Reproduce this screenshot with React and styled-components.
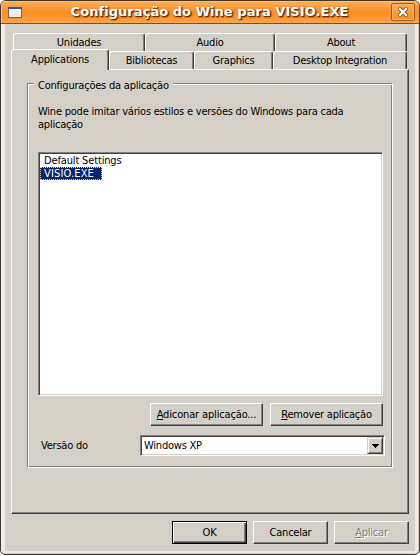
import React from "react";
import styled, { createGlobalStyle, css } from "styled-components";

const Global = createGlobalStyle`
  * { box-sizing: border-box; }
  body { margin: 0; background: #fff; }
`;

const face = "#d4d0c8";

const raised = css`
  border: 1px solid;
  border-color: #fff #404040 #404040 #fff;
  box-shadow: inset -1px -1px #808080;
`;

const sunken = css`
  border: 1px solid;
  border-color: #808080 #fff #fff #808080;
  box-shadow: inset 1px 1px #404040, inset -1px -1px ${face};
`;

const Window = styled.div`
  width: 420px;
  height: 555px;
  overflow: hidden;
  border: 1px solid #40362f;
  border-radius: 6px 6px 5px 5px;
  background: #efebe4;
  box-shadow: inset -1px -1px #d8cabb;
  font: 11px/13px "DejaVu Sans Condensed", "DejaVu Sans", sans-serif;
  font-stretch: condensed;
  color: #000;
`;

const TitleBar = styled.header`
  height: 23px;
  display: flex;
  align-items: center;
  padding: 0 4px 0 7px;
  border-bottom: 1px solid #8c4a14;
  box-shadow: inset 1px 1px #ffc07a;
  background: linear-gradient(#ffb05c 0, #ff9c3c 30%, #f88f24 50%, #fb962f 75%, #ffa64a 100%);
`;

const WindowIcon = styled.svg`
  width: 14px;
  height: 11px;
  flex: none;
`;

const Title = styled.h1`
  flex: 1;
  margin: 0;
  padding-left: 6px;
  text-align: center;
  white-space: nowrap;
  font: bold 13px/22px "DejaVu Sans", sans-serif;
  letter-spacing: ${(p) => p.$spacing}px;
  color: #fff;
  text-shadow: 1px 1px 1px #4a2608, 1px 1px 2px #6d3a10;
`;

const CloseButton = styled.button`
  width: 24px;
  height: 18px;
  padding: 0;
  display: grid;
  place-items: center;
  border: 1px solid #a05a1c;
  border-radius: 2px;
  background: linear-gradient(#ffad59, #f58f2a);
  box-shadow: inset 0 0 0 1px #ffb56b;
`;

const Body = styled.main`
  height: 527px;
  margin: 0 4px;
  padding: 9px 6px 0;
  background: ${face};
`;

const TabRow = styled.div`
  display: flex;
  height: ${(p) => p.$height}px;
  padding: 0 2px;
  ${(p) => p.$front && css`
    position: relative;
    z-index: 1;
    align-items: flex-end;
    margin-top: -2px;
    padding-left: 0;
  `}
`;

const Tab = styled.div`
  flex: none;
  width: ${(p) => p.$width}px;
  height: 18px;
  line-height: 17px;
  border: 1px solid #fff;
  border-right-color: #404040;
  border-bottom: 0;
  border-radius: 3px 3px 0 0;
  box-shadow: inset -1px 0 #808080;
  background: ${face};
  text-align: center;
  ${(p) => p.$active && css`
    height: 21px;
    margin-bottom: -1px;
    line-height: 19px;
  `}
`;

const TabPage = styled.section`
  width: 398px;
  height: 445px;
  padding: 13px 16px 0 15px;
  ${raised}
`;

const Group = styled.section`
  width: 366px;
  height: 385px;
  padding: 0 9px 0 10px;
  border: 1px solid #808080;
  border-right-color: #fff;
  border-bottom-color: #fff;
  box-shadow: inset 1px 1px #fff, inset -1px -1px #808080;
`;

const Legend = styled.h2`
  width: 139px;
  height: 13px;
  margin: -5px 0 0 -4px;
  padding-left: 4px;
  font: inherit;
  background: ${face};
`;

const Label = styled.span`
  letter-spacing: ${(p) => p.$spacing ?? -0.22}px;
  white-space: nowrap;
`;

const Description = styled.p`
  height: 47px;
  margin: 13px 0 0;
`;

const Line = styled.span`
  display: block;
`;

const List = styled.div`
  width: 345px;
  height: 244px;
  padding: 1px;
  background: #fff;
  ${sunken}
`;

const Item = styled.div`
  width: ${(p) => (p.$selected ? "62px" : "auto")};
  height: 13px;
  padding-left: 4px;
  line-height: 14px;
  ${(p) => p.$selected && css`
    padding-left: 3px;
    line-height: 12px;
    color: #fff;
    background: #0a246a;
    border: 1px dotted #f5db95;
  `}
`;

const Actions = styled.div`
  display: flex;
  justify-content: flex-end;
  gap: ${(p) => p.$gap}px;
  padding-top: 7px;
`;

const Button = styled.button`
  width: ${(p) => p.$width || 75}px;
  height: 23px;
  padding: 0;
  font: inherit;
  line-height: 21px;
  color: #000;
  background: ${face};
  ${raised}
  ${(p) => p.$default && css`
    border-color: #000;
    box-shadow: inset 1px 1px #fff, inset -1px -1px #404040, inset -2px -2px #808080;
  `}
  &:disabled {
    color: #808080;
    text-shadow: 1px 1px #fff;
  }
`;

const Field = styled.div`
  display: flex;
  align-items: center;
  width: 347px;
  margin-top: 9px;
`;

const FieldName = styled.div`
  flex: none;
  width: 102px;
  padding-left: 3px;
`;

const Combo = styled.div`
  flex: none;
  display: flex;
  width: 245px;
  height: 21px;
  padding: 1px;
  background: #fff;
  ${sunken}
`;

const Value = styled.div`
  flex: 1;
  padding-left: 2px;
  line-height: 18px;
`;

const DropButton = styled.div`
  width: 16px;
  height: 17px;
  display: grid;
  place-items: center;
  background: ${face};
  border: 1px solid;
  border-color: ${face} #404040 #404040 ${face};
  box-shadow: inset 1px 1px #fff, inset -1px -1px #808080;
`;

export default function App() {
  return (
    <>
      <Global />
      <Window>
        <TitleBar>
          <WindowIcon viewBox="0 0 14 11" shapeRendering="crispEdges">
            <path fill="#7b614c" d="M0 0h14v11H0z" />
            <path fill="#eeeeec" d="M1 2h12v8H1z" />
            <path fill="#315b8e" d="M0 0h14v2H0z" />
          </WindowIcon>
          <Title $spacing={0.05}>Configuração do Wine para VISIO.EXE</Title>
          <CloseButton aria-label="Fechar">
            <svg width="10" height="10" viewBox="0 0 10 10">
              <path d="M2 2l6 6M8 2l-6 6" stroke="#7d410c" strokeWidth="4" strokeLinecap="square" />
              <path d="M2 2l6 6M8 2l-6 6" stroke="#fff" strokeWidth="2.4" strokeLinecap="square" />
            </svg>
          </CloseButton>
        </TitleBar>
        <Body>
          <TabRow $height={18}>
            <Tab $width={132}><Label>Unidades</Label></Tab>
            <Tab $width={130}><Label>Audio</Label></Tab>
            <Tab $width={132}><Label>About</Label></Tab>
          </TabRow>
          <TabRow $front $height={20}>
            <Tab $active $width={98}><Label>Applications</Label></Tab>
            <Tab $width={85}><Label>Bibliotecas</Label></Tab>
            <Tab $width={79}><Label>Graphics</Label></Tab>
            <Tab $width={134}><Label>Desktop Integration</Label></Tab>
          </TabRow>
          <TabPage>
            <Group>
              <Legend><Label>Configurações da aplicação</Label></Legend>
              <Description>
                <Line><Label>Wine pode imitar vários estilos e versões do Windows para cada</Label></Line>
                <Line><Label>aplicação</Label></Line>
              </Description>
              <List>
                <Item><Label $spacing={-0.15}>Default Settings</Label></Item>
                <Item $selected><Label $spacing={0.15}>VISIO.EXE</Label></Item>
              </List>
              <Actions $gap={7}>
                <Button $width={113}><Label $spacing={-0.15}><u>A</u>diconar aplicação...</Label></Button>
                <Button $width={113}><Label><u>R</u>emover aplicação</Label></Button>
              </Actions>
              <Field>
                <FieldName><Label>Versão do</Label></FieldName>
                <Combo>
                  <Value><Label>Windows XP</Label></Value>
                  <DropButton>
                    <svg width="7" height="4" viewBox="0 0 7 4" shapeRendering="crispEdges">
                      <path d="M0 0h7v1H6v1H5v1H4v1H3V3H2V2H1V1H0z" />
                    </svg>
                  </DropButton>
                </Combo>
              </Field>
            </Group>
          </TabPage>
          <Actions $gap={6}>
            <Button $default><Label>OK</Label></Button>
            <Button><Label>Cancelar</Label></Button>
            <Button disabled><Label><u>A</u>plicar</Label></Button>
          </Actions>
        </Body>
      </Window>
    </>
  );
}
